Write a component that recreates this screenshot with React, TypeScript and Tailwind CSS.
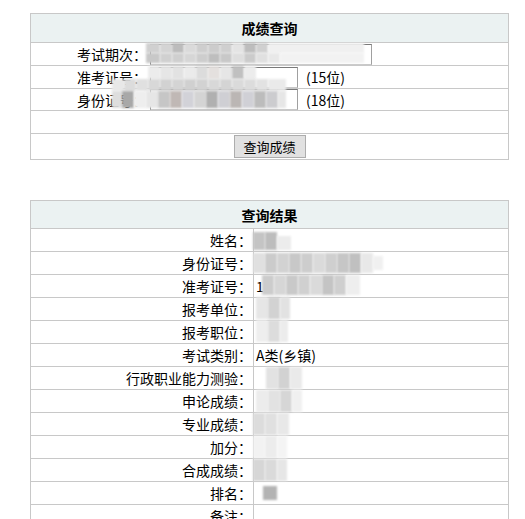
import React from 'react';

type Cell = [number, number, number, number, string];

// 打码区域：页面坐标下的马赛克方块
const mosaic: Cell[] = [
  // 考试期次
  [146, 43, 14, 10, '#d0d0d0'], [160, 43, 12, 10, '#d4d4d4'], [172, 43, 12, 10, '#bcbcbc'],
  [184, 43, 12, 10, '#dadada'], [196, 43, 12, 10, '#cecece'], [208, 43, 12, 10, '#cccccc'],
  [220, 43, 12, 10, '#cfcfcf'], [232, 43, 12, 10, '#e4e4e4'], [244, 43, 12, 10, '#bdbdbd'],
  [256, 43, 12, 10, '#d0d0d0'], [268, 43, 96, 10, '#f0f0f0'],
  [146, 53, 14, 10, '#c8c8c8'], [160, 53, 12, 10, '#d0d0d0'], [172, 53, 12, 10, '#cfcfcf'],
  [184, 53, 12, 10, '#d6d6d6'], [196, 53, 12, 10, '#cdcdcd'], [208, 53, 12, 10, '#bebebe'],
  [220, 53, 12, 10, '#c8c8c8'], [232, 53, 12, 10, '#dedede'], [244, 53, 12, 10, '#cbcbcb'],
  [256, 53, 12, 10, '#e0e0e0'], [268, 53, 12, 10, '#e8e8e8'], [280, 53, 84, 10, '#f2f2f2'],
  // 准考证号 / 身份证号
  [148, 66, 12, 13, '#ececec'], [160, 66, 12, 13, '#e6e6e6'], [172, 66, 12, 13, '#e2e2e2'],
  [184, 66, 12, 13, '#ebebeb'], [196, 66, 12, 13, '#dcdcdc'], [208, 66, 12, 13, '#e4e0de'],
  [220, 66, 12, 13, '#e6e6e6'], [232, 66, 12, 13, '#c0c0c0'], [244, 66, 12, 13, '#ececec'],
  [112, 79, 12, 12, '#e8e8e8'], [124, 79, 12, 12, '#dcdcdc'], [136, 79, 12, 12, '#e0e0e0'],
  [148, 79, 12, 12, '#d8d8d8'], [160, 79, 12, 12, '#d2d2d2'], [172, 79, 12, 12, '#d4d4d4'],
  [184, 79, 12, 12, '#d0d0d0'], [196, 79, 12, 12, '#d2d2d2'], [208, 79, 12, 12, '#d8d8d8'],
  [220, 79, 12, 12, '#d4d4d4'], [232, 79, 12, 12, '#dadada'], [244, 79, 12, 12, '#dcdcdc'],
  [256, 79, 12, 12, '#e2e2e2'], [268, 79, 18, 12, '#eaeaea'],
  [112, 91, 10, 17, '#dedede'], [122, 91, 12, 17, '#a8a8a8'], [134, 91, 12, 17, '#eeeeee'],
  [146, 91, 12, 17, '#e6e6e6'], [158, 91, 12, 17, '#c6c6c6'], [170, 91, 12, 17, '#c0b8b5'],
  [182, 91, 12, 17, '#d2d2d8'], [194, 91, 12, 17, '#d4d4d4'], [206, 91, 12, 17, '#b0b0b0'],
  [218, 91, 12, 17, '#cfcfd4'], [230, 91, 12, 17, '#bbb6b4'], [242, 91, 12, 17, '#d0d0d6'],
  [254, 91, 12, 17, '#bcbcbc'], [266, 91, 12, 17, '#cccccf'], [278, 91, 8, 17, '#e6e6e6'],
  // 查询结果
  [253, 232, 12, 18, '#c4c4c4'], [265, 232, 12, 18, '#bdbdbd'], [277, 236, 14, 14, '#ececec'],
  [253, 253, 12, 20, '#e0e0e0'], [265, 253, 12, 20, '#cbcbcb'], [277, 253, 12, 20, '#d2d2d2'],
  [289, 253, 12, 20, '#c8c8c8'], [301, 253, 12, 20, '#cdcdcd'], [313, 253, 12, 20, '#dadada'],
  [325, 253, 12, 20, '#cfcfcf'], [337, 253, 12, 20, '#c6c6c6'], [349, 253, 12, 20, '#c0c0c0'],
  [361, 253, 12, 20, '#e8e8e8'], [373, 256, 10, 14, '#f0f0f0'],
  [262, 275, 12, 20, '#cccccc'], [274, 275, 12, 20, '#d6d6d6'], [286, 275, 12, 20, '#c9c9c9'],
  [298, 275, 12, 20, '#d0d0d0'], [310, 275, 12, 20, '#dadada'], [322, 275, 12, 20, '#c4c4c4'],
  [334, 275, 12, 20, '#cfcfcf'], [346, 275, 14, 20, '#eeeeee'],
  [256, 297, 12, 22, '#e6e6e6'], [268, 297, 12, 22, '#d2d2d2'], [280, 297, 10, 22, '#e2e2e2'],
  [256, 320, 12, 22, '#eeeeee'], [268, 320, 12, 22, '#dcdcdc'], [280, 320, 8, 22, '#ececec'],
  [266, 367, 12, 22, '#e2e2e2'], [278, 367, 12, 22, '#d2d2d2'], [290, 367, 12, 22, '#eaeaea'],
  [256, 390, 12, 22, '#ececec'], [268, 390, 12, 22, '#e2e2e2'], [280, 390, 12, 22, '#d6d6d6'],
  [292, 390, 10, 22, '#f0f0f0'],
  [253, 413, 12, 22, '#dcdcdc'], [265, 413, 12, 22, '#e0e0e0'], [277, 413, 12, 22, '#e8e8e8'],
  [253, 436, 12, 22, '#f2f2f2'], [265, 436, 12, 22, '#ececec'], [277, 436, 10, 22, '#f4f4f4'],
  [253, 459, 12, 22, '#d6d6d6'], [265, 459, 12, 22, '#dadada'], [277, 459, 10, 22, '#e6e6e6'],
  [263, 486, 14, 14, '#b3b3b3'],
];

const results: [string, string][] = [
  ['姓名：', ''],
  ['身份证号：', ''],
  ['准考证号：', '1'],
  ['报考单位：', ''],
  ['报考职位：', ''],
  ['考试类别：', 'A类(乡镇)'],
  ['行政职业能力测验：', ''],
  ['申论成绩：', ''],
  ['专业成绩：', ''],
  ['加分：', ''],
  ['合成成绩：', ''],
  ['排名：', ''],
  ['备注：', ''],
];

function InputRow({ label, wide, hint, short }: { label: string; wide?: boolean; hint?: string; short?: boolean }) {
  return (
    <div
      className={`flex items-center border-b border-[#c8c8c8] pl-[46px] ${short ? 'h-[22px]' : 'h-[23px]'}`}
    >
      <span className="w-[73px]">{label}</span>
      <input
        className={`h-[21px] border border-t-[#7a7a7a] border-l-[#7a7a7a] border-r-[#a0a0a0] border-b-[#c8c8c8] bg-white ${
          wide ? 'w-[222px]' : 'w-[148px]'
        }`}
      />
      {hint && <span className="ml-[8px]">{hint}</span>}
    </div>
  );
}

export default function App() {
  return (
    <div
      className="relative min-h-[519px] bg-white pt-[13px] text-[14px] leading-none text-black"
      style={{ fontFamily: '"Noto Sans CJK SC", "Noto Sans", sans-serif' }}
    >
      {/* 成绩查询 */}
      <div className="ml-[30px] w-[479px] border border-[#c8c8c8]">
        <div className="flex h-[29px] items-center justify-center border-b border-[#c8c8c8] bg-[#ebf2f2] font-bold">
          成绩查询
        </div>
        <InputRow label="考试期次：" wide />
        <InputRow label="准考证号：" hint="(15位)" />
        <InputRow label="身份证号：" hint="(18位)" short />
        <div className="h-[23px] border-b border-[#c8c8c8]" />
        <div className="flex h-[25px] items-center justify-center">
          <button className="h-[23px] w-[72px] border border-[#adadad] bg-[#e1e1e1] text-[13px]">
            查询成绩
          </button>
        </div>
      </div>

      {/* 查询结果 */}
      <div className="ml-[30px] mt-[40px] w-[479px] border border-b-0 border-[#c8c8c8]">
        <div className="flex h-[28px] items-center justify-center border-b border-[#c8c8c8] bg-[#ebf2f2] font-bold">
          查询结果
        </div>
        {results.map(([label, value]) => (
          <div key={label} className="flex h-[23px] border-b border-[#c8c8c8]">
            <div className="flex w-[223px] items-center justify-end border-r border-[#c8c8c8] pr-[1px]">
              {label}
            </div>
            <div className="flex items-center pl-[2px]">{value}</div>
          </div>
        ))}
      </div>

      {/* 打码 */}
      {mosaic.map(([x, y, w, h, c], i) => (
        <div
          key={i}
          className="absolute blur-[0.8px]"
          style={{ left: x, top: y, width: w, height: h, background: c }}
        />
      ))}
    </div>
  );
}
